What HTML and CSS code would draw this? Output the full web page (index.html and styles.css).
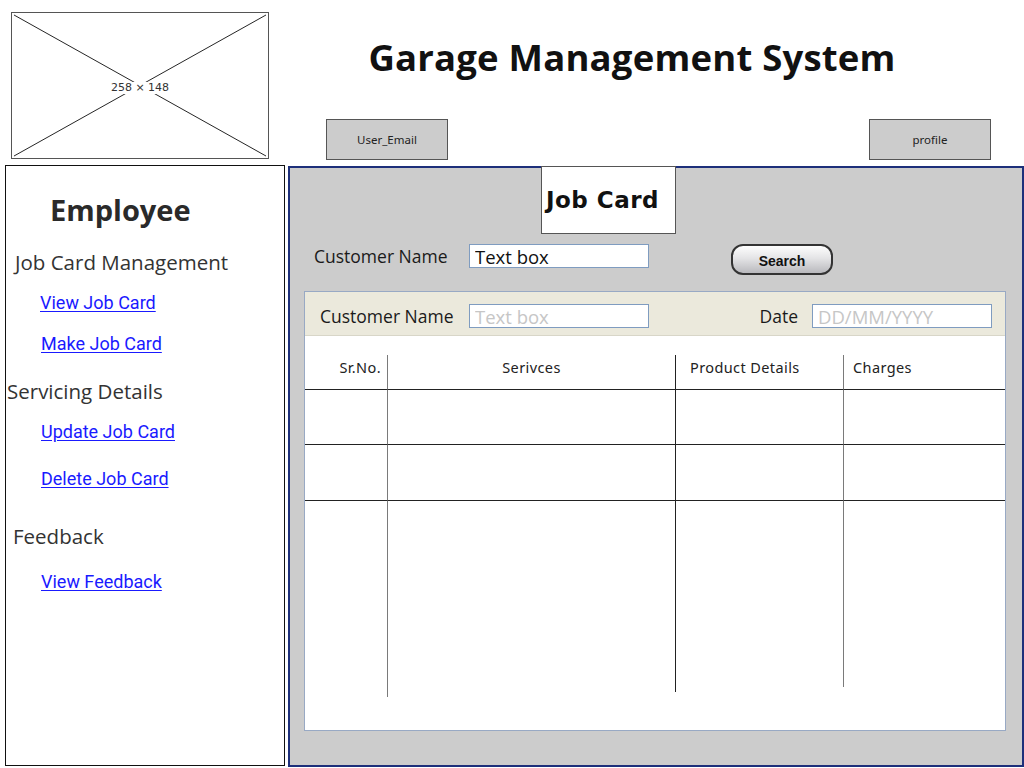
FILE: index.html
```html
<!DOCTYPE html>
<html>
<head>
<meta charset="utf-8">
<title>Garage Management System</title>
<link rel="stylesheet" href="styles.css">
</head>
<body>
<div class="page">
  <div class="logo-cell">
    <div class="logo">
      <svg class="logo-x" viewBox="0 0 258 147" preserveAspectRatio="none">
        <line x1="2" y1="2" x2="256" y2="145" stroke="#222" stroke-width="1"/>
        <line x1="256" y1="2" x2="2" y2="145" stroke="#222" stroke-width="1"/>
      </svg>
      <span class="logo-label">258 × 148</span>
    </div>
  </div>
  <header class="top">
    <h1 class="title">Garage Management System</h1>
    <div class="top-buttons">
      <div class="sketch-btn">User_Email</div>
      <div class="sketch-btn">profile</div>
    </div>
  </header>
  <nav class="sidebar">
    <div class="side-title">Employee</div>
    <div class="side-head h-jcm">Job Card Management</div>
    <a class="side-link l-view" href="#">View Job Card</a>
    <a class="side-link l-make" href="#">Make Job Card</a>
    <div class="side-head h-serv">Servicing Details</div>
    <a class="side-link l-update" href="#">Update Job Card</a>
    <a class="side-link l-delete" href="#">Delete Job Card</a>
    <div class="side-head h-feed">Feedback</div>
    <a class="side-link l-feed" href="#">View Feedback</a>
  </nav>
  <main class="main">
    <div class="tab">Job Card</div>
    <div class="search-row">
      <label class="field-label lbl-search">Customer Name</label>
      <input class="textbox" type="text" value="Text box">
      <button class="search-btn">Search</button>
    </div>
    <section class="panel">
      <div class="panel-head">
        <label class="field-label lbl-cust">Customer Name</label>
        <input class="textbox" type="text" placeholder="Text box">
        <label class="field-label lbl-date">Date</label>
        <input class="textbox" type="text" placeholder="DD/MM/YYYY">
      </div>
      <div class="grid-area">
        <div class="jc-grid">
          <div class="cell hd c1 srno">Sr.No.</div>
          <div class="cell hd c2 svc">Serivces</div>
          <div class="cell hd c3 prod">Product Details</div>
          <div class="cell hd c4 chg">Charges</div>

          <div class="cell r2 c1"></div>
          <div class="cell r2 c2"></div>
          <div class="cell r2 c3"></div>
          <div class="cell r2 c4"></div>

          <div class="cell r3 c1"></div>
          <div class="cell r3 c2"></div>
          <div class="cell r3 c3"></div>
          <div class="cell r3 c4"></div>

          <div class="cell last c1 h1"></div>
          <div class="cell last c2 h2"></div>
          <div class="cell last c3 h3"></div>
          <div class="cell last c4"></div>
        </div>
      </div>
    </section>
  </main>
</div>
</body>
</html>
```

FILE: styles.css
```css
html, body {
  margin: 0;
  padding: 0;
  background: #ffffff;
}

body {
  font-family: "Open Sans", "Noto Sans", sans-serif;
  color: #222;
}

.page {
  display: grid;
  grid-template-columns: 288px 736px;
  grid-template-rows: 165px 603px;
  width: 1024px;
  height: 768px;
  overflow: hidden;
}

/* ---------- logo placeholder ---------- */
.logo-cell {
  padding: 12px 0 0 11px;
}

.logo {
  position: relative;
  width: 258px;
  height: 147px;
  box-sizing: border-box;
  border: 1.5px solid #555;
  display: flex;
  align-items: center;
  justify-content: center;
}

.logo-x {
  position: absolute;
  inset: 0;
  width: 100%;
  height: 100%;
}

.logo-label {
  position: relative;
  background: #fff;
  font-family: "DejaVu Sans", sans-serif;
  font-size: 11px;
  line-height: 12px;
  color: #333;
  padding: 0 1px;
  margin-top: 4px;
}

/* ---------- header ---------- */
.top {
  display: flex;
  flex-direction: column;
}

.title {
  margin: 34px 48px 0 0;
  text-align: center;
  font-family: "Open Sans", sans-serif;
  font-weight: 700;
  font-size: 36.5px;
  line-height: 46px;
  color: #111;
  letter-spacing: 0.2px;
}

.top-buttons {
  display: flex;
  justify-content: space-between;
  margin-top: 39px;
  padding: 0 33px 0 38px;
}

.sketch-btn {
  width: 122px;
  height: 41px;
  box-sizing: border-box;
  background: #cccccc;
  border: 1.5px solid #555;
  display: flex;
  align-items: center;
  justify-content: center;
  font-family: "Noto Sans", sans-serif;
  font-size: 11.5px;
  color: #222;
}

/* ---------- sidebar ---------- */
.sidebar {
  margin-left: 5px;
  width: 280px;
  height: 601px;
  box-sizing: border-box;
  border: 1px solid #111;
  display: flex;
  flex-direction: column;
  align-items: flex-start;
}

.side-title {
  margin: 26px 0 0 44px;
  font-weight: 700;
  font-size: 29px;
  line-height: 36px;
  color: #2a2a2a;
}

.side-head {
  font-size: 20.5px;
  line-height: 24px;
  color: #333;
}

.h-jcm { margin: 22px 0 0 9px; }
.h-serv { margin: 23px 0 0 1px; }
.h-feed { margin: 33px 0 0 7px; }

.side-link {
  font-family: "Roboto", sans-serif;
  font-size: 18px;
  line-height: 24px;
  color: #1a1aff;
  text-decoration: underline;
  text-underline-offset: 2px;
}

.l-view { margin: 17px 0 0 34px; }
.l-make { margin: 17px 0 0 35px; }
.l-update { margin: 17px 0 0 35px; }
.l-delete { margin: 23px 0 0 35px; }
.l-feed { margin: 22px 0 0 35px; }

/* ---------- main ---------- */
.main {
  margin-top: 1px;
  width: 736px;
  height: 601px;
  box-sizing: border-box;
  border: 2px solid #1d2f7a;
  background: #cccccc;
  display: flex;
  flex-direction: column;
  align-items: flex-start;
}

.tab {
  margin: -2px 0 0 251px;
  width: 135px;
  height: 68px;
  box-sizing: border-box;
  border: 1.5px solid #555;
  background: #fff;
  display: flex;
  align-items: center;
  padding-left: 4px;
  font-family: "DejaVu Sans", sans-serif;
  font-weight: 700;
  font-size: 23px;
  color: #111;
  letter-spacing: 0.5px;
}

.search-row {
  display: flex;
  align-items: flex-start;
  margin-top: 10px;
  padding-left: 24px;
}

.field-label {
  font-size: 17.5px;
  line-height: 24px;
  color: #1a1a1a;
}

.lbl-search {
  width: 155px;
}

.textbox {
  width: 180px;
  height: 24px;
  box-sizing: border-box;
  margin: 0;
  border: 1px solid #7f9cc0;
  background: #fff;
  padding: 0 5px;
  font-family: "Open Sans", sans-serif;
  font-size: 18.5px;
  color: #111;
  outline: none;
}

.textbox::placeholder {
  color: #c6c6c6;
}

.search-btn {
  margin-left: 82px;
  width: 102px;
  height: 31px;
  box-sizing: border-box;
  border: 2px solid #333;
  border-radius: 12px;
  background: linear-gradient(#fdfdfd 0%, #e4e4e6 45%, #b9b9bd 100%);
  font-family: "Liberation Sans", Arial, sans-serif;
  font-weight: 700;
  font-size: 14px;
  color: #111;
  padding: 3px 0 0 0;
}

/* ---------- panel ---------- */
.panel {
  margin: 16px 0 0 14px;
  width: 702px;
  height: 440px;
  box-sizing: border-box;
  border: 1px solid #98a9c4;
  background: #fff;
  display: flex;
  flex-direction: column;
}

.panel-head {
  height: 44px;
  box-sizing: border-box;
  background: #ebe9dc;
  border-bottom: 1px solid #d8d6c8;
  display: flex;
  align-items: center;
  padding: 5px 13px 0 15px;
}

.lbl-cust {
  width: 149px;
}

.lbl-date {
  margin-left: auto;
  margin-right: 14px;
}

.grid-area {
  padding-top: 19px;
}

.jc-grid {
  display: grid;
  grid-template-columns: 83px 288px 168px 1fr;
  grid-template-rows: 35px 55px 56px 196px;
}

.cell {
  box-sizing: border-box;
}

.c1, .c2, .c3 {
  border-right: 1px solid #7a7a7a;
}

.c2.r2, .c2.r3, .c2.hd, .c2.last {
  border-right-color: #222;
}

.hd, .r2, .r3 {
  border-bottom: 1px solid #222;
}

.hd {
  font-family: "Noto Sans", sans-serif;
  font-size: 14.5px;
  letter-spacing: 0.4px;
  line-height: 20px;
  color: #222;
  padding-top: 2px;
}

.srno { text-align: right; padding-right: 6px; }
.svc { text-align: center; }
.prod { padding-left: 14px; }
.chg { padding-left: 9px; }

.last { align-self: start; }
.last.h1 { height: 196px; }
.last.h2 { height: 191px; }
.last.h3 { height: 186px; }
```
